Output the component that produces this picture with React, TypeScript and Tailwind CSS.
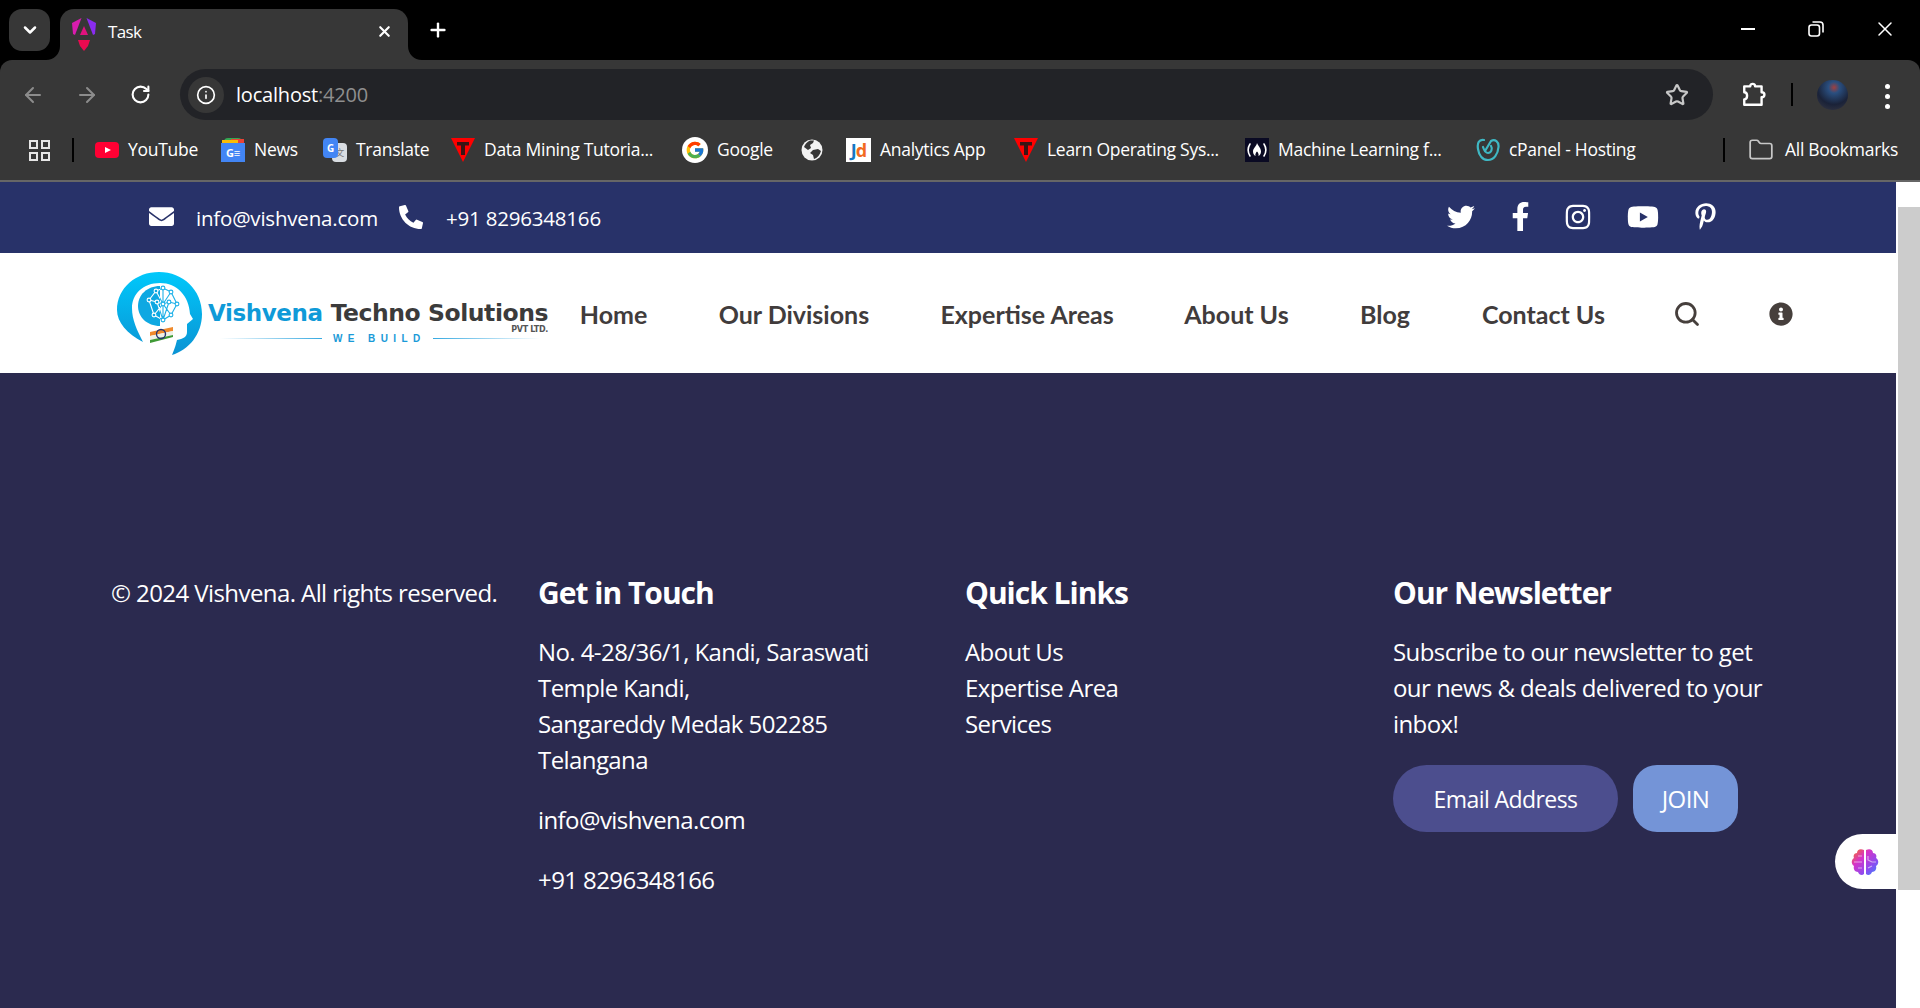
import React from "react";
import { FaEnvelope, FaPhoneAlt, FaTwitter, FaFacebookF, FaInstagram, FaYoutube, FaPinterestP, FaInfoCircle } from "react-icons/fa";
import { FcGoogle } from "react-icons/fc";
import { ArrowLeft, ArrowRight, RotateCw, Info, Star, Folder, X, Plus, ChevronDown, Search } from "lucide-react";

function AngularIcon() {
  return (
    <svg width="24" height="33" viewBox="0 0 24 33" className="shrink-0">
      <path d="M0 5 9.5 0 3 17 1 16Z" fill="#d91cae" />
      <path d="M14.5 0 24 5 23 16 21 17Z" fill="#8a2cf0" />
      <path d="M12 8 16 17H8Z" fill="#e0127e" />
      <path d="M6 22H18L16 28 12 33 8 28Z" fill="#ec0a50" />
    </svg>
  );
}

function YouTubeIcon() {
  return (
    <svg width="24" height="16" viewBox="0 0 24 16" className="shrink-0">
      <rect width="24" height="16" rx="4" fill="#ff0033" />
      <path d="M10 5 16 8 10 11Z" fill="#fff" />
    </svg>
  );
}

function NewsIcon() {
  return (
    <div className="relative w-[24px] h-[24px] shrink-0">
      <div className="absolute left-[3px] top-0 w-[18px] h-[5px] rounded-t-sm bg-[#34a853]" />
      <div className="absolute left-[10px] top-[1px] w-[13px] h-[5px] bg-[#ea4335]" />
      <div className="absolute left-[1px] top-[2px] w-[16px] h-[5px] bg-[#fbbc04]" />
      <div className="absolute left-0 top-[5px] w-[24px] h-[19px] bg-[#4285f4] flex items-center justify-center text-white text-[11px] font-bold leading-none">
        G≡
      </div>
    </div>
  );
}

function TranslateIcon() {
  return (
    <div className="relative w-[24px] h-[24px] shrink-0">
      <div className="absolute right-0 top-[5px] w-[15px] h-[19px] bg-[#d9dde2] rounded-sm flex items-center justify-center text-[#777] text-[9px] font-['Noto_Sans_CJK_SC',sans-serif]">
        文
      </div>
      <div className="absolute left-0 top-0 w-[15px] h-[20px] bg-[#4285f4] rounded-sm flex items-center justify-center text-white text-[10px] font-bold leading-none">
        G
      </div>
    </div>
  );
}

function TriangleT() {
  return (
    <svg width="24" height="24" viewBox="0 0 24 24" className="shrink-0">
      <path d="M0 0H24L12 24Z" fill="#ff0000" />
      <path d="M6 4H18V7.5H14V17H10V7.5H6Z" fill="#3a1414" />
    </svg>
  );
}

function GlobeIcon() {
  return (
    <svg width="22" height="22" viewBox="0 0 22 22" className="shrink-0">
      <circle cx="11" cy="11" r="10.5" fill="#f2f2f2" />
      <path d="M9 1.5C6 3 4 5 3 8L7 11 10 9 9 6 12 4 13 1.5Z" fill="#373737" />
      <path d="M12 11 17 10 20 12C19 16 16 19 13 20L12 16 9 14Z" fill="#373737" />
    </svg>
  );
}

function JdIcon() {
  return (
    <div className="w-[25px] h-[24px] shrink-0 bg-white flex items-center justify-center text-[18px] font-bold leading-none tracking-[-1px]">
      <span className="text-[#1578c2]">J</span>
      <span className="text-[#f26a21]">d</span>
    </div>
  );
}

function FccIcon() {
  return (
    <svg width="24" height="24" viewBox="0 0 24 24" className="shrink-0">
      <rect width="24" height="24" fill="#0a0a23" />
      <path d="M5 6C2.5 10 2.5 14 5 18M19 6C21.5 10 21.5 14 19 18" stroke="#fff" strokeWidth="1.6" fill="none" strokeLinecap="round" />
      <path d="M12 5C13 8 16 10 16 13.5 16 16 14.5 17.5 13.5 18 14 16 13 14.5 12 13.5 11 14.5 10 16 10.5 18 9.5 17.5 8 16 8 13.5 8 10 11.5 8.5 12 5Z" fill="#fff" />
    </svg>
  );
}

function CpanelIcon() {
  return (
    <svg width="24" height="24" viewBox="0 0 24 24" className="shrink-0" fill="none" stroke="#3fb8c4" strokeWidth="2.2" strokeLinecap="round">
      <path d="M8 2C3 1 1 5 2 11 3 18 7 22 12 22 18 22 22 16 22.5 9 23 4 19 .5 15 3L9 13" />
      <path d="M15 8C17 11 15 15 12 15 10 15 8 12 7 9" />
    </svg>
  );
}

function GoogleIcon() {
  return (
    <div className="w-[26px] h-[26px] rounded-full bg-white flex items-center justify-center shrink-0">
      <FcGoogle size={20} />
    </div>
  );
}

function BrowserChrome() {
  const bookmarks: [React.ReactNode, string, string, string][] = [
    [<YouTubeIcon />, "YouTube", "ml-[21px]", "w-[69px]"],
    [<NewsIcon />, "News", "ml-[24px]", "w-[44px]"],
    [<TranslateIcon />, "Translate", "ml-[25px]", "w-[71px]"],
    [<TriangleT />, "Data Mining Tutoria...", "ml-[24px]", "w-[173px]"],
    [<GoogleIcon />, "Google", "ml-[25px]", "w-[60px]"],
    [<GlobeIcon />, "", "ml-[24px]", "w-0"],
    [<JdIcon />, "Analytics App", "ml-[23px]", "w-[108px]"],
    [<TriangleT />, "Learn Operating Sys...", "ml-[26px]", "w-[173px]"],
    [<FccIcon />, "Machine Learning f...", "ml-[25px]", "w-[166px]"],
    [<CpanelIcon />, "cPanel - Hosting", "ml-[32px]", "w-[131px]"],
  ];
  return (
    <div className="bg-black">
      <div className="h-[60px] flex items-end relative">
        <div className="absolute left-[9px] top-[9px] w-[41px] h-[42px] rounded-[13px] bg-[#373737] flex items-center justify-center">
          <ChevronDown size={20} strokeWidth={3} className="text-white" />
        </div>
        <div className="ml-[60px] w-[348px] h-[51px] rounded-t-[14px] bg-[#373737] flex items-center pl-[12px] pr-[15px] relative">
          <svg width="14" height="14" viewBox="0 0 14 14" className="absolute -left-[14px] bottom-0"><path d="M14 0V14H0C8 14 14 8 14 0Z" fill="#373737" /></svg>
          <svg width="14" height="14" viewBox="0 0 14 14" className="absolute -right-[14px] bottom-0"><path d="M0 0V14H14C6 14 0 8 0 0Z" fill="#373737" /></svg>
          <AngularIcon />
          <span className="ml-[12px] text-white text-[17px] -mt-[5px] tracking-[-0.6px]">Task</span>
          <X size={17} strokeWidth={3} className="ml-auto text-white -mt-[6px]" />
        </div>
        <Plus size={22} strokeWidth={2.6} className="absolute left-[427px] top-[19px] text-white" />
        <div className="absolute right-[23px] top-[17px] flex items-center text-white">
          <div className="w-[14px] h-[2px] bg-white" />
          <svg width="16" height="16" viewBox="0 0 16 16" fill="none" stroke="#fff" strokeWidth="1.6" className="ml-[53px]"><rect x="1" y="4" width="10.5" height="11" rx="2.5" /><path d="M4.5 1H12a3 3 0 0 1 3 3v7.5" /></svg>
          <X size={24} strokeWidth={1.5} className="ml-[49px]" />
        </div>
      </div>
      <div className="bg-[#373737] rounded-t-[12px]">
        <div className="h-[60px] flex items-start relative">
          <div className="w-[180px] h-[51px] mt-[9px] flex items-center">
            <ArrowLeft size={24} className="ml-[21px] text-[#8c8c8c]" />
            <ArrowRight size={24} className="ml-[30px] text-[#8c8c8c]" />
            <RotateCw size={21} strokeWidth={2.4} className="ml-[31px] text-white" />
          </div>
          <div className="w-[1533px] h-[51px] mt-[9px] rounded-full bg-[#222327] flex items-center pl-[8px] pr-[24px]">
            <div className="w-[36px] h-[36px] rounded-full bg-[#373737] flex items-center justify-center">
              <Info size={20} className="text-white" />
            </div>
            <span className="ml-[12px] text-[20px] text-white tracking-[-0.2px]">localhost<span className="text-[#8f8f8f]">:4200</span></span>
            <Star size={24} strokeWidth={2.2} className="ml-auto text-[#c7c7c7]" />
          </div>
          <svg width="26" height="26" viewBox="0 0 24 24" className="absolute left-[1741px] top-[22px]" fill="none" stroke="#fff" strokeWidth="2.2" strokeLinejoin="round"><path d="M3 4H8.5C8.5 1 13 1 13 4H19V9.5C22.5 9.5 22.5 14 19 14V21H3V16C6.5 16 6.5 9.5 3 9.5Z" /></svg>
          <div className="absolute left-[1791px] top-[23px] w-[2px] h-[23px] bg-black" />
          <div className="absolute left-[1817px] top-[20px] w-[31px] h-[30px] rounded-full bg-[radial-gradient(circle_at_55%_25%,#a04040_0,#2a4f80_20%,#1a2238_60%,#3a3a44_100%)]" />
          <div className="absolute left-[1885px] top-[24px] flex flex-col gap-[5px]">
            <div className="w-[5px] h-[5px] rounded-full bg-white" />
            <div className="w-[5px] h-[5px] rounded-full bg-white" />
            <div className="w-[5px] h-[5px] rounded-full bg-white" />
          </div>
        </div>
        <div className="h-[60px] flex items-center text-white text-[17.5px] tracking-[-0.28px] relative">
          <div className="ml-[29px] grid grid-cols-2 gap-[3px] w-[21px] shrink-0">
            <div className="h-[9px] border-2 border-[#e6e6e6]" />
            <div className="h-[9px] border-2 border-[#e6e6e6]" />
            <div className="h-[9px] border-2 border-[#e6e6e6]" />
            <div className="h-[9px] border-2 border-[#e6e6e6]" />
          </div>
          <div className="ml-[22px] w-[2px] h-[24px] bg-black shrink-0" />
          {bookmarks.map(([icon, label, ml, w], i) => (
            <div key={i} className={`flex items-center shrink-0 ${ml}`}>
              {icon}
              {label ? <span className={`ml-[9px] -mt-[2px] whitespace-nowrap ${w}`}>{label}</span> : null}
            </div>
          ))}
          <div className="absolute left-[1723px] top-[18px] w-[2px] h-[24px] bg-black" />
          <Folder size={26} strokeWidth={1.6} className="absolute left-[1748px] top-[17px] text-[#c7c7c7]" />
          <span className="absolute left-[1785px] top-[16px] whitespace-nowrap">All Bookmarks</span>
        </div>
        <div className="h-[2px] bg-[#666666]" />
      </div>
    </div>
  );
}

function Network({ stroke, fill }: { stroke: string; fill: string }) {
  const nodes = [[32, 28], [39, 19], [46, 16], [54, 20], [60, 32], [54, 43], [46, 48], [37, 43], [46, 32], [40, 30], [52, 30]];
  return (
    <g stroke={stroke} strokeWidth="1.1" fill={fill}>
      <path d="M32 28 39 19 46 16 54 20 60 32 54 43 46 48 37 43 32 28M39 19 46 32 54 20M32 28 40 30 46 32 52 30 60 32M37 43 46 32 54 43M46 16 46 48M40 30 46 48M52 30 46 48" fill="none" />
      {nodes.map(([x, y], i) => (
        <circle key={i} cx={x} cy={y} r="1.9" />
      ))}
    </g>
  );
}

function Logo() {
  return (
    <div className="flex items-center w-[431px] shrink-0">
      <svg width="85" height="84" viewBox="0 0 85 84" className="shrink-0 mt-[2px]">
        <defs>
          <linearGradient id="lg" x1="0" y1="0" x2="0" y2="1">
            <stop offset="0" stopColor="#00c8fb" />
            <stop offset="1" stopColor="#0b93d3" />
          </linearGradient>
          <clipPath id="cl"><rect x="0" y="0" width="43" height="84" /></clipPath>
          <clipPath id="cr"><rect x="43" y="0" width="42" height="84" /></clipPath>
        </defs>
        <path d="M26 70C10 62 0 50 0 38 0 16 19 0 42 0 66 0 85 18 85 42 85 62 72 78 55 83 58 76 59 72 60 68 66 67 70 65 70 60L70 52 76 47 73 42C72 24 60 11 43 11 26 11 15 22 15 36 15 48 20 58 26 70Z" fill="url(#lg)" />
        <path d="M43 14C30 14 21 23 21 34S30 54 43 54Z" fill="#0ea8e2" />
        <g clipPath="url(#cl)"><Network stroke="#ffffff" fill="#0ea8e2" /></g>
        <g clipPath="url(#cr)"><Network stroke="#1fb1e8" fill="#ffffff" /></g>
        <path d="M33 60 56 55V59L33 64Z" fill="#f08a2c" />
        <path d="M33 64 56 59V63L33 68Z" fill="#eef1e6" />
        <path d="M33 68 56 63V65L33 71Z" fill="#3f9a36" />
        <circle cx="44" cy="62" r="4.5" fill="none" stroke="#25356f" strokeWidth="1.4" />
      </svg>
      <div className="ml-[6px] w-[340px] relative h-[84px] font-['DejaVu_Sans',sans-serif]">
        <div className="pt-[27px] flex items-baseline whitespace-nowrap font-bold text-[23px] leading-[30px] tracking-[-0.4px]">
          <span className="text-[#0f9ad8] w-[123px]">Vishvena</span>
          <span className="text-[#3b3b3b] text-[23.5px] tracking-[-0.45px]">Techno Solutions</span>
        </div>
        <div className="absolute right-0 top-[55px] text-[8px] leading-[8px] font-bold text-[#555] tracking-[-0.3px]">PVT LTD.</div>
        <div className="flex items-center mt-[5px] h-[10px]">
          <div className="ml-[12px] w-[102px] h-[1px] bg-gradient-to-r from-transparent to-[#36a9e1]" />
          <div className="ml-[11px] w-[86px] text-[10px] font-bold text-[#1a9ad8] tracking-[5.4px] whitespace-nowrap font-['Liberation_Sans',sans-serif]">WE BUILD</div>
          <div className="ml-[14px] w-[107px] h-[1px] bg-gradient-to-r from-[#36a9e1] to-transparent" />
        </div>
      </div>
    </div>
  );
}

function TopBar() {
  return (
    <div className="h-[71px] bg-[#283269] text-white flex items-center text-[20.5px] tracking-[-0.2px]">
      <FaEnvelope size={25} className="ml-[149px] shrink-0 -mt-[2px]" />
      <span className="ml-[22px] mt-[1px] w-[180px] whitespace-nowrap">info@vishvena.com</span>
      <FaPhoneAlt size={24} className="ml-[23px] shrink-0 -mt-[2px]" />
      <span className="ml-[23px] mt-[1px] whitespace-nowrap">+91 8296348166</span>
      <div className="ml-auto mr-[177px] flex items-center -mt-[2px]">
        <FaTwitter size={28} />
        <FaFacebookF size={29} className="ml-[31px]" />
        <FaInstagram size={28} className="ml-[29px]" />
        <FaYoutube size={32} className="ml-[35px]" />
        <FaPinterestP size={27} className="ml-[33px]" />
      </div>
    </div>
  );
}

function NavBar() {
  const items: [string, string][] = [
    ["Home", "w-[68px]"],
    ["Our Divisions", "w-[151px]"],
    ["Expertise Areas", "w-[173px]"],
    ["About Us", "w-[105px]"],
    ["Blog", "w-[51px]"],
    ["Contact Us", "w-[123px]"],
  ];
  return (
    <div className="h-[120px] bg-white flex items-center pl-[117px]">
      <Logo />
      <div className="ml-[32px] flex items-center gap-[71px] text-[25px] font-bold text-[#413c3c] font-['Lato',sans-serif]">
        {items.map(([t, w]) => (
          <span key={t} className={`whitespace-nowrap mt-[3px] -ml-[0.2px] ${w}`}>{t}</span>
        ))}
        <Search size={28} strokeWidth={2.4} className="text-[#463f3c] -ml-[3px] mt-[1px]" />
        <FaInfoCircle size={24} className="text-[#463f3c] -ml-[3px] mt-[1px]" />
      </div>
    </div>
  );
}

function Footer() {
  return (
    <div className="flex-1 bg-[#2b2a4f] text-white pt-[199px] pl-[111px] grid grid-cols-[427px_427px_428px_1fr] text-[24px] leading-[36px] tracking-[-0.58px] relative">
      <div className="pt-[3px] whitespace-nowrap">© 2024 Vishvena. All rights reserved.</div>
      <div>
        <h4 className="text-[30px] leading-[42px] font-bold mb-[20px] tracking-[-1px]">Get in Touch</h4>
        <p>No. 4-28/36/1, Kandi, Saraswati<br />Temple Kandi,<br />Sangareddy Medak 502285<br />Telangana</p>
        <p className="mt-[24px]">info@vishvena.com</p>
        <p className="mt-[24px]">+91 8296348166</p>
      </div>
      <div>
        <h4 className="text-[30px] leading-[42px] font-bold mb-[20px] tracking-[-1px]">Quick Links</h4>
        <p>About Us</p>
        <p>Expertise Area</p>
        <p>Services</p>
      </div>
      <div>
        <h4 className="text-[30px] leading-[42px] font-bold mb-[20px] tracking-[-1px]">Our Newsletter</h4>
        <p className="w-[390px]">Subscribe to our newsletter to get our news &amp; deals delivered to your inbox!</p>
        <div className="mt-[23px] flex items-center gap-[15px]">
          <div className="w-[225px] h-[67px] rounded-full bg-[#4c4e8e] flex items-center justify-center text-[23px]">Email Address</div>
          <div className="w-[105px] h-[67px] rounded-[24px] bg-[#7494d7] flex items-center justify-center">JOIN</div>
        </div>
      </div>
      <div className="absolute right-0 top-[461px] w-[61px] h-[55px] bg-white rounded-l-full flex items-center pl-[15px]">
        <svg width="30" height="30" viewBox="0 0 30 30">
          <defs>
            <linearGradient id="br" x1="0" y1="0" x2="1" y2="1">
              <stop offset="0" stopColor="#f97316" />
              <stop offset="0.35" stopColor="#d633c8" />
              <stop offset="0.7" stopColor="#8b4df0" />
              <stop offset="1" stopColor="#2f8bff" />
            </linearGradient>
          </defs>
          <path d="M14 3C10 1 7 3 7 6 4 6 3 9 4 11 1 13 1 17 4 19 3 22 5 25 8 25 9 28 12 29 14 27ZM16 3C20 1 23 3 23 6 26 6 27 9 26 11 29 13 29 17 26 19 27 22 25 25 22 25 21 28 18 29 16 27Z" fill="url(#br)" />
          <path d="M4 15H12M8 9H12M8 21H12M18 9V13L22 15M26 15H22M18 21 22 19" stroke="#fff" strokeOpacity="0.55" strokeWidth="1.2" fill="none" />
        </svg>
      </div>
    </div>
  );
}

function Scrollbar() {
  return (
    <div className="w-[24px] shrink-0 bg-white pt-[25px]">
      <div className="h-[683px] bg-[#cccccc] ml-[2px]" />
    </div>
  );
}

export default function App() {
  return (
    <div className="w-[1920px] h-[1008px] overflow-hidden flex flex-col bg-black font-['Open_Sans',sans-serif]">
      <BrowserChrome />
      <div className="flex-1 flex min-h-0">
        <div className="flex-1 flex flex-col min-w-0">
          <TopBar />
          <NavBar />
          <Footer />
        </div>
        <Scrollbar />
      </div>
    </div>
  );
}
